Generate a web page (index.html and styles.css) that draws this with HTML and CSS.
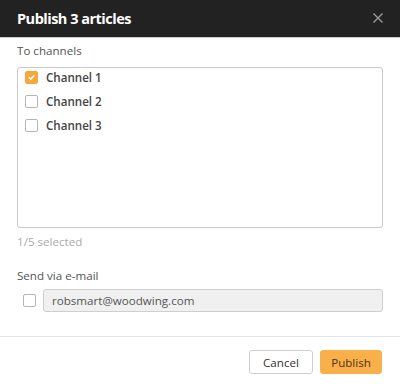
FILE: index.html
```html
<!DOCTYPE html>
<html>
<head>
<meta charset="utf-8">
<link rel="stylesheet" href="styles.css">
</head>
<body>
<div class="dialog">
  <div class="header">
    <div class="title">Publish 3 articles</div>
    <svg class="close" width="12" height="12" viewBox="0 0 12 12"><path d="M1.5 1.5 L10.5 10.5 M10.5 1.5 L1.5 10.5" stroke="#9a9a9a" stroke-width="1.4" fill="none"/></svg>
  </div>
  <div class="content">
    <div class="label">To channels</div>
    <div class="list">
      <label class="row"><span class="cb checked"><svg width="12" height="12" viewBox="0 0 12 12"><path d="M3 6.2 L5.2 8.3 L9.2 4" stroke="#fff" stroke-width="1.6" fill="none"/></svg></span><span class="name">Channel 1</span></label>
      <label class="row"><span class="cb"></span><span class="name">Channel 2</span></label>
      <label class="row"><span class="cb"></span><span class="name">Channel 3</span></label>
    </div>
    <div class="count">1/5 selected</div>
    <div class="label email-label">Send via e-mail</div>
    <div class="email-row">
      <span class="cb"></span>
      <div class="input">robsmart@woodwing.com</div>
    </div>
  </div>
  <div class="footer">
    <button class="btn cancel">Cancel</button>
    <button class="btn publish">Publish</button>
  </div>
</div>
</body>
</html>
```
FILE: styles.css
```css
* { box-sizing: border-box; }
body {
  margin: 0;
  width: 400px;
  height: 384px;
  background: #fff;
  font-family: "Open Sans", "Noto Sans", sans-serif;
  font-size: 11.6px;
  color: #444;
}
.header {
  height: 38px;
  background: #222222;
  border-bottom: 1px solid #c9c9c9;
  display: flex;
  align-items: center;
  justify-content: space-between;
  padding: 0 17px 1px 17px;
}
.title {
  color: #fff;
  font-weight: 700;
  font-size: 14.5px;
  letter-spacing: -0.5px;
}
.close { margin-right: -1px; }
.content {
  padding: 0 17px;
}
.label {
  color: #555;
  line-height: 16px;
  margin-top: 5px;
}
.list {
  margin-top: 8px;
  height: 161px;
  border: 1px solid #c8c8c8;
  border-radius: 3px;
  padding-top: 0;
  display: flex;
  flex-direction: column;
  gap: 6px;
}
.row {
  display: flex;
  align-items: center;
  height: 18px;
  padding-left: 7px;
  gap: 8px;
}
.cb {
  width: 13px;
  height: 13px;
  border: 1px solid #b5b5b5;
  border-radius: 2px;
  background: #fff;
  display: inline-flex;
  align-items: center;
  justify-content: center;
  flex: none;
}
.cb.checked {
  background: #f6a83c;
  border-color: #f6a83c;
}
.name {
  font-weight: 600;
  color: #444;
}
.count {
  color: #aaa;
  margin-top: 6px;
  line-height: 16px;
}
.email-label {
  margin-top: 18px;
}
.email-row {
  display: flex;
  align-items: center;
  margin-top: 5px;
  gap: 7px;
  padding-left: 6px;
}
.input {
  flex: 1;
  height: 23px;
  background: #f0f0f0;
  border: 1px solid #cfcfcf;
  border-radius: 3px;
  padding-left: 8px;
  display: flex;
  align-items: center;
  color: #555;
}
.footer {
  margin-top: 24px;
  border-top: 1px solid #e4e4e4;
  display: flex;
  justify-content: flex-end;
  gap: 7px;
  padding: 13px 18px 0 0;
}
.btn {
  height: 24px;
  border-radius: 3px;
  font-family: "Open Sans", "Noto Sans", sans-serif;
  font-size: 11.6px;
  padding: 0;
  cursor: pointer;
}
.cancel {
  width: 64px;
  background: #fff;
  border: 1px solid #cfcfcf;
  color: #333;
}
.publish {
  width: 62px;
  background: #f9b04a;
  border: 1px solid #f9b04a;
  color: #4a3515;
}
```
